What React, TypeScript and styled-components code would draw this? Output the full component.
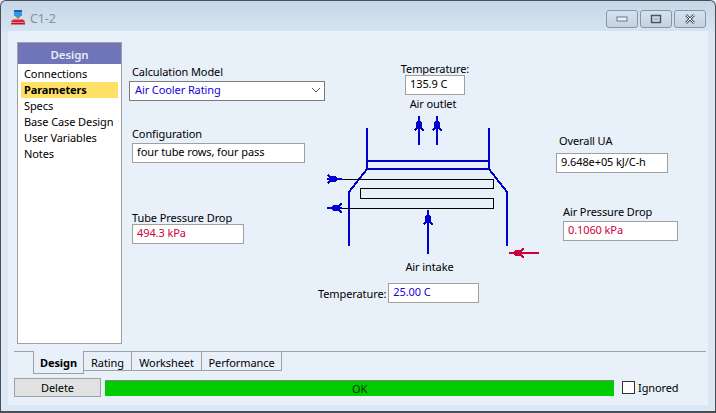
import styled, { createGlobalStyle } from 'styled-components';

const GlobalStyle = createGlobalStyle`
  html, body {
    margin: 0;
    padding: 0;
    background: #dbe7f3;
  }
  * {
    box-sizing: border-box;
  }
`;

const Window = styled.div`
  width: 716px;
  height: 413px;
  display: flex;
  flex-direction: column;
  border: 1px solid #4a4f55;
  border-bottom-width: 2px;
  border-radius: 6px 6px 0 0;
  background: linear-gradient(#c6d6e6 0, #d6e4f1 30px, #dbe7f3 31px);
  font-family: 'Noto Sans', sans-serif;
  font-size: 11px;
  letter-spacing: -0.1px;
  color: #000;
  overflow: hidden;
`;

const TitleBar = styled.div`
  height: 30px;
  flex: none;
  display: flex;
  align-items: center;
  padding: 4px 7px 0 9px;
`;

const TitleText = styled.span`
  margin-left: 4px;
  font-size: 12.5px;
  color: #8a9097;
  flex: 1;
`;

const CaptionButtons = styled.div`
  display: flex;
  gap: 2px;
  margin-top: 2px;
  margin-right: 2px;
`;

const CaptionButton = styled.div`
  width: 32px;
  height: 18px;
  display: flex;
  align-items: center;
  justify-content: center;
  border: 1px solid #8995a8;
  border-radius: 3px;
  background: linear-gradient(#d6e2ee, #c3d2e2);
`;

const Client = styled.div`
  flex: 1;
  margin: 0 7px 6px 7px;
  background: #e8f0fa;
  display: flex;
  flex-direction: column;
`;

const Main = styled.div`
  height: 320px;
  flex: none;
  display: flex;
  padding: 11px 0 0 9px;
`;

const Sidebar = styled.div`
  width: 105px;
  height: 302px;
  flex: none;
  background: #fff;
  border: 1px solid #a0a0a0;
`;

const SidebarHeader = styled.div`
  height: 21px;
  background: #6f75b8;
  color: #e8eaf6;
  font-weight: 600;
  font-size: 11.5px;
  line-height: 23px;
  text-align: center;
`;

const SidebarList = styled.div`
  padding: 2px 3px 0 3px;
`;

const SidebarItem = styled.div<{ $active?: boolean }>`
  height: 16px;
  line-height: 16px;
  padding-left: 3px;
  white-space: nowrap;
  font-weight: ${({ $active }) => ($active ? 700 : 400)};
  background: ${({ $active }) => ($active ? '#ffe066' : 'transparent')};
`;

const FormColumn = styled.div`
  width: 186px;
  flex: none;
  margin-left: 10px;
  display: flex;
  flex-direction: column;
`;

const Label = styled.div`
  line-height: 15px;
  white-space: nowrap;
`;

const TightLabel = styled(Label)`
  line-height: 13px;
`;

const Field = styled.div<{ $w: number; $tone?: 'blue' | 'red' }>`
  width: ${({ $w }) => $w}px;
  height: 20px;
  flex: none;
  background: #fff;
  border: 1px solid #a0a0a0;
  padding-left: 4px;
  line-height: 16px;
  white-space: nowrap;
  color: ${({ $tone }) =>
    $tone === 'blue' ? '#1a00e0' : $tone === 'red' ? '#d0003c' : '#000'};
`;

const Select = styled(Field)`
  margin-left: -3px;
  border-color: #7a7a7a;
  display: flex;
  justify-content: space-between;
  align-items: center;
  padding: 0 3px 2px 5px;
`;

const CalcGroup = styled.div`
  margin-top: 22px;
  display: flex;
  flex-direction: column;
  gap: 2px;
`;

const ConfigGroup = styled(CalcGroup)`
  margin-top: 25px;
  gap: 2px;
`;

const PressureGroup = styled(CalcGroup)`
  margin-top: 48px;
  gap: 0;
`;

const Centre = styled.div`
  width: 222px;
  flex: none;
  display: flex;
  flex-direction: column;
  align-items: center;
  padding-top: 20px;
`;

const TempTop = styled.div`
  margin-left: 12px;
  display: flex;
  flex-direction: column;
  align-items: center;
`;

const OutletLabel = styled(Label)`
  margin: 1px 0 1px 8px;
`;

const IntakeLabel = styled(TightLabel)`
  margin-left: 1px;
`;

const Diagram = styled.svg`
  display: block;
  flex: none;
  shape-rendering: crispEdges;
`;

const TempBottom = styled.div`
  align-self: flex-start;
  display: flex;
  align-items: center;
  gap: 2px;
  margin-top: 10px;
`;

const RightColumn = styled.div`
  flex: 1;
  display: flex;
  flex-direction: column;
  padding: 91px 0 0 16px;
`;

const UaGroup = styled(CalcGroup)`
  margin-top: 0;
  gap: 5px;
`;

const UaLabel = styled(Label)`
  margin-left: 3px;
`;

const AirDropGroup = styled(CalcGroup)`
  margin: 31px 0 0 7px;
  gap: 2px;
`;

const TabRow = styled.div`
  height: 21px;
  flex: none;
  margin-left: 6px;
  width: 692px;
  display: flex;
  padding-left: 19px;
  border-top: 1px solid #a0a0a0;
`;

const Tab = styled.div<{ $w: number; $active?: boolean }>`
  width: ${({ $w }) => $w}px;
  height: ${({ $active }) => ($active ? 23 : 19)}px;
  margin-top: ${({ $active }) => ($active ? -1 : 0)}px;
  line-height: ${({ $active }) => ($active ? 23 : 21)}px;
  text-align: center;
  font-weight: ${({ $active }) => ($active ? 700 : 400)};
  border: 1px solid #a0a0a0;
  border-top-width: 0;
  border-left-width: ${({ $active }) => ($active ? 1 : 0)}px;
  background: #e8f0fa;
`;

const StatusRow = styled.div`
  display: flex;
  align-items: center;
  margin: 6px 0 0 6px;
`;

const DeleteButton = styled.div`
  width: 87px;
  height: 19px;
  background: #e1e1e1;
  border: 1px solid #a0a0a0;
  text-align: center;
  line-height: 17px;
`;

const StatusBar = styled.div`
  width: 509px;
  height: 16px;
  margin-left: 4px;
  background: #00cc00;
  border-top: 1px solid #808080;
  text-align: center;
  line-height: 15px;
  color: #003300;
`;

const CheckLabel = styled.div`
  display: flex;
  align-items: center;
  gap: 3px;
  margin-left: 8px;
`;

const CheckBox = styled.div`
  width: 13px;
  height: 13px;
  background: #fff;
  border: 1px solid #333;
`;

const BLUE = '#0000cc';
const RED = '#c8003c';

const navItems = ['Connections', 'Parameters', 'Specs', 'Base Case Design', 'User Variables', 'Notes'];
const tabs = [
  { name: 'Design', width: 51 },
  { name: 'Rating', width: 48 },
  { name: 'Worksheet', width: 70 },
  { name: 'Performance', width: 80 },
];

const AppIcon = () => (
  <svg width="16" height="16" viewBox="0 0 16 16">
    <rect x="4" y="0" width="8" height="2" fill="#2f55b0" />
    <rect x="4" y="2" width="8" height="4" fill="#2f9be8" />
    <path d="M4 6h8l1 3H3z" fill="#d8dde4" />
    <path d="M5 6l3 3 3-3z" fill="#7a8494" />
    <path d="M3 9.5h10l2 2v1H2l-1-1z" fill="#e02030" />
    <rect x="1" y="13" width="14" height="1.5" fill="#c01828" />
  </svg>
);

// tip is where the shaft ends, head sits a few px behind it like the original flowsheet arrows
const Arrow = ({ tipX, tipY, length, angle, color }: { tipX: number; tipY: number; length: number; angle: number; color: string }) => (
  <g transform={`translate(${tipX} ${tipY}) rotate(${angle})`}>
    <rect x="0" y="-1" width={length} height="2" fill={color} />
    <polygon
      points="5,-1 6,-3 11,-3 14,-5 15,-4 13,-1 13,1 15,4 14,5 11,3 6,3 5,1"
      fill={color}
    />
  </g>
);

export default function App() {
  return (
    <>
      <GlobalStyle />
      <Window>
        <TitleBar>
          <AppIcon />
          <TitleText>C1-2</TitleText>
          <CaptionButtons>
            <CaptionButton>
              <svg width="12" height="6" viewBox="0 0 12 6">
                <rect x="1" y="1" width="10" height="4" fill="#eef1f5" stroke="#70747c" />
              </svg>
            </CaptionButton>
            <CaptionButton>
              <svg width="12" height="10" viewBox="0 0 12 10">
                <rect x="1.5" y="1.5" width="9" height="7" fill="none" stroke="#4f545c" strokeWidth="1.5" />
                <rect x="3.5" y="4" width="5" height="2" fill="#b0b8c4" />
              </svg>
            </CaptionButton>
            <CaptionButton>
              <svg width="12" height="10" viewBox="0 0 12 10">
                <path d="M2 1l8 8M10 1l-8 8" stroke="#555a62" strokeWidth="2.6" />
                <path d="M2 1l8 8M10 1l-8 8" stroke="#eef1f5" strokeWidth="1" />
              </svg>
            </CaptionButton>
          </CaptionButtons>
        </TitleBar>
        <Client>
          <Main>
            <Sidebar>
              <SidebarHeader>Design</SidebarHeader>
              <SidebarList>
                {navItems.map((item) => (
                  <SidebarItem key={item} $active={item === 'Parameters'}>
                    {item}
                  </SidebarItem>
                ))}
              </SidebarList>
            </Sidebar>
            <FormColumn>
              <CalcGroup>
                <Label>Calculation Model</Label>
                <Select $w={196} $tone="blue">
                  Air Cooler Rating
                  <svg width="10" height="6" viewBox="0 0 10 6">
                    <path d="M1 1l4 4 4-4" stroke="#555" fill="none" />
                  </svg>
                </Select>
              </CalcGroup>
              <ConfigGroup>
                <Label>Configuration</Label>
                <Field $w={173}>four tube rows, four pass</Field>
              </ConfigGroup>
              <PressureGroup>
                <TightLabel>Tube Pressure Drop</TightLabel>
                <Field $w={112} $tone="red">494.3 kPa</Field>
              </PressureGroup>
            </FormColumn>
            <Centre>
              <TempTop>
                <TightLabel>Temperature:</TightLabel>
                <Field $w={60}>135.9 C</Field>
              </TempTop>
              <OutletLabel>Air outlet</OutletLabel>
              <Diagram width="222" height="148" viewBox="318 112 222 148">
                <g stroke={BLUE} strokeWidth="2" fill="none">
                  <path d="M367 128V169H489V128" />
                  <path d="M367 161H489" />
                  <path d="M367 169L349 192V246" />
                  <path d="M489 169L507 192V246" />
                </g>
                <path
                  d="M342 179.5H493.5V188.5H360.5V198.5H493.5V208.5H340"
                  stroke="#000"
                  fill="none"
                />
                <Arrow tipX={419} tipY={116} length={29} angle={90} color={BLUE} />
                <Arrow tipX={437} tipY={116} length={29} angle={90} color={BLUE} />
                <Arrow tipX={428} tipY={210} length={44} angle={90} color={BLUE} />
                <Arrow tipX={342} tipY={179} length={15} angle={180} color={BLUE} />
                <Arrow tipX={327} tipY={208} length={15} angle={0} color={BLUE} />
                <Arrow tipX={509} tipY={253} length={30} angle={0} color={RED} />
              </Diagram>
              <IntakeLabel>Air intake</IntakeLabel>
              <TempBottom>
                <Label>Temperature:</Label>
                <Field $w={91} $tone="blue">25.00 C</Field>
              </TempBottom>
            </Centre>
            <RightColumn>
              <UaGroup>
                <UaLabel>Overall UA</UaLabel>
                <Field $w={112}>9.648e+05 kJ/C-h</Field>
              </UaGroup>
              <AirDropGroup>
                <Label>Air Pressure Drop</Label>
                <Field $w={115} $tone="red">0.1060 kPa</Field>
              </AirDropGroup>
            </RightColumn>
          </Main>
          <TabRow>
            {tabs.map((tab) => (
              <Tab key={tab.name} $w={tab.width} $active={tab.name === 'Design'}>
                {tab.name}
              </Tab>
            ))}
          </TabRow>
          <StatusRow>
            <DeleteButton>Delete</DeleteButton>
            <StatusBar>OK</StatusBar>
            <CheckLabel>
              <CheckBox />
              Ignored
            </CheckLabel>
          </StatusRow>
        </Client>
      </Window>
    </>
  );
}
